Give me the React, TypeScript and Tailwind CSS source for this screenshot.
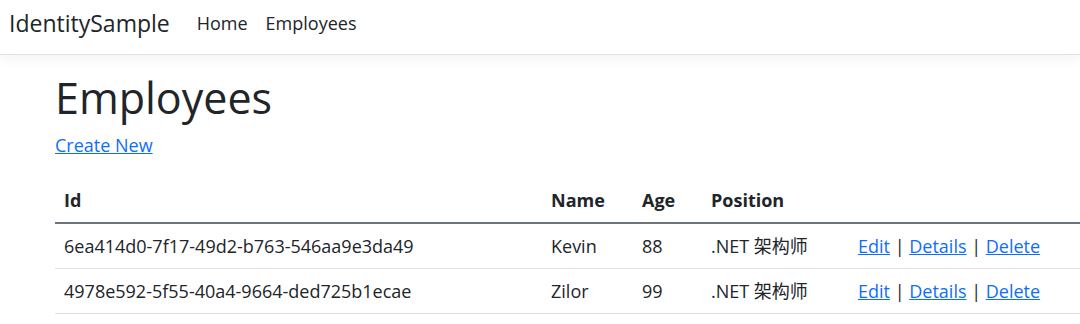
import React from 'react';

interface Employee {
  id: string;
  name: string;
  age: number;
  position: string;
}

const employees: Employee[] = [
  { id: '6ea414d0-7f17-49d2-b763-546aa9e3da49', name: 'Kevin', age: 88, position: '.NET 架构师' },
  { id: '4978e592-5f55-40a4-9664-ded725b1ecae', name: 'Zilor', age: 99, position: '.NET 架构师' },
];

export default function App() {
  return (
    <div className="w-[1080px] h-[324px] overflow-hidden bg-white text-[#212529] font-['Open_Sans','Noto_Sans_CJK_SC',sans-serif]">
      <nav className="h-[55px] flex items-center px-[9px] pb-[8px] border-b border-[#dee2e6] shadow-[0_4px_12px_rgba(0,0,0,0.05)]">
        <a className="text-[23px] mr-[27px]">IdentitySample</a>
        <ul className="flex gap-[18px] text-[18px] pt-[1px]">
          <li>Home</li>
          <li>Employees</li>
        </ul>
      </nav>

      <main className="pl-[55px]">
        <h1 className="text-[43px] leading-[50px] mt-[18px] mb-[9px]">Employees</h1>
        <p className="text-[18px] leading-[27px]">
          <a className="text-[#0d6efd] underline">Create New</a>
        </p>

        <table className="mt-[20px] w-[1030px] border-collapse text-[18px] text-left">
          <thead>
            <tr className="border-b-2 border-[#6c757d]">
              <th className="h-[44px] px-[9px] font-bold w-[487px]">Id</th>
              <th className="h-[44px] px-[9px] font-bold w-[91px]">Name</th>
              <th className="h-[44px] px-[9px] font-bold w-[69px]">Age</th>
              <th className="h-[44px] px-[9px] font-bold w-[147px]">Position</th>
              <th className="h-[44px] px-[9px]"></th>
            </tr>
          </thead>
          <tbody>
            {employees.map((e) => (
              <tr key={e.id} className="border-b border-[#dee2e6]">
                <td className="h-[45px] px-[9px] pt-[1px]">{e.id}</td>
                <td className="h-[45px] px-[9px] pt-[1px]">{e.name}</td>
                <td className="h-[45px] px-[9px] pt-[1px]">{e.age}</td>
                <td className="h-[45px] px-[9px] pt-[1px]">{e.position}</td>
                <td className="h-[45px] px-[9px] pt-[1px] whitespace-nowrap">
                  <a className="text-[#0d6efd] underline">Edit</a> |{' '}
                  <a className="text-[#0d6efd] underline">Details</a> |{' '}
                  <a className="text-[#0d6efd] underline">Delete</a>
                </td>
              </tr>
            ))}
          </tbody>
        </table>
      </main>
    </div>
  );
}
